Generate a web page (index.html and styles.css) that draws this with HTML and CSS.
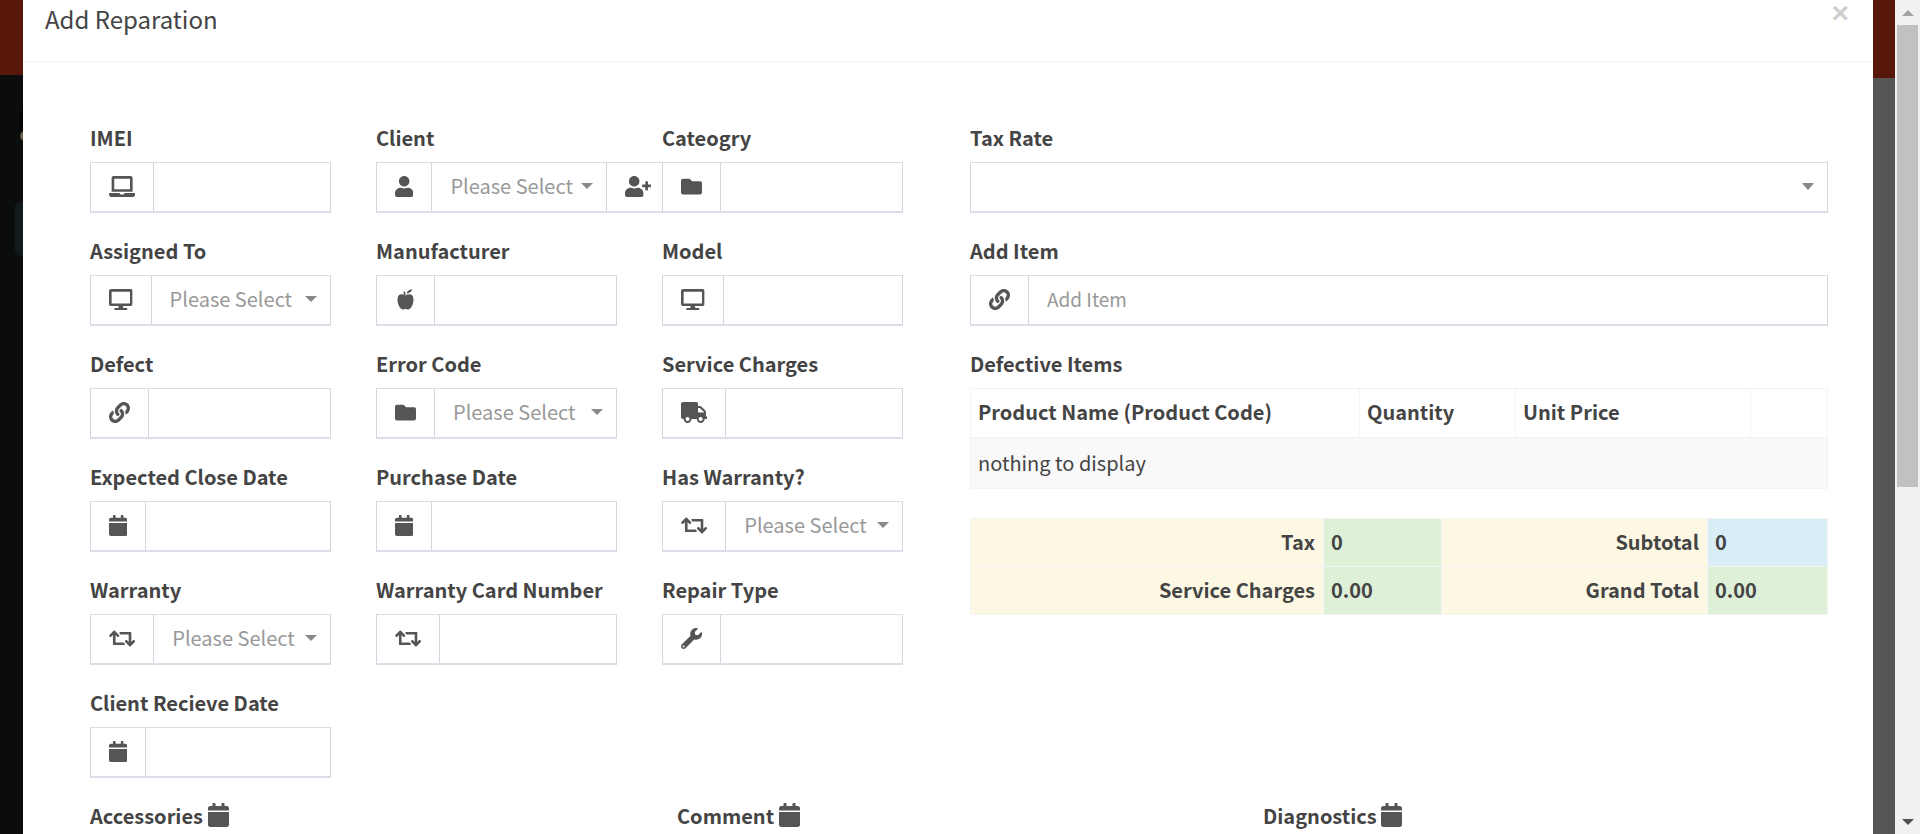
FILE: index.html
```html
<!DOCTYPE html>
<html lang="en">
<head>
<meta charset="utf-8">
<title>Add Reparation</title>
<link rel="stylesheet" href="styles.css">
</head>
<body>
<svg class="defs" width="0" height="0" aria-hidden="true">
  <defs>
    <symbol id="i-laptop" viewBox="0 0 640 512"><path d="M624 416H381.540c-.740 19.810-14.710 32-32.740 32H288c-18.690 0-33.020-17.470-32.770-32H16c-8.800 0-16 7.200-16 16v16c0 35.200 28.800 64 64 64h512c35.200 0 64-28.800 64-64v-16c0-8.800-7.200-16-16-16zM576 48c0-26.400-21.600-48-48-48H112C85.600 0 64 21.600 64 48v336h512V48zm-64 272H128V64h384v256z"/></symbol>
    <symbol id="i-user" viewBox="0 0 448 512"><path d="M224 256c70.700 0 128-57.300 128-128S294.700 0 224 0 96 57.300 96 128s57.300 128 128 128zm89.600 32h-16.700c-22.200 10.200-46.900 16-72.900 16s-50.600-5.800-72.900-16h-16.700C60.200 288 0 348.200 0 422.400V464c0 26.500 21.500 48 48 48h352c26.500 0 48-21.500 48-48v-41.600c0-74.200-60.200-134.400-134.400-134.400z"/></symbol>
    <symbol id="i-user-plus" viewBox="0 0 640 512"><path d="M624 208h-64v-64c0-8.800-7.200-16-16-16h-32c-8.800 0-16 7.200-16 16v64h-64c-8.800 0-16 7.200-16 16v32c0 8.800 7.200 16 16 16h64v64c0 8.800 7.200 16 16 16h32c8.800 0 16-7.200 16-16v-64h64c8.800 0 16-7.200 16-16v-32c0-8.800-7.200-16-16-16zm-400 48c70.700 0 128-57.300 128-128S294.700 0 224 0 96 57.300 96 128s57.300 128 128 128zm89.600 32h-16.700c-22.200 10.200-46.900 16-72.900 16s-50.600-5.800-72.900-16h-16.700C60.200 288 0 348.200 0 422.400V464c0 26.500 21.500 48 48 48h352c26.500 0 48-21.500 48-48v-41.600c0-74.200-60.200-134.400-134.400-134.400z"/></symbol>
    <symbol id="i-folder" viewBox="0 0 512 512"><path d="M464 128H272l-64-64H48C21.490 64 0 85.490 0 112v288c0 26.510 21.490 48 48 48h416c26.510 0 48-21.490 48-48V176c0-26.510-21.490-48-48-48z"/></symbol>
    <symbol id="i-desktop" viewBox="0 0 576 512"><path d="M528 0H48C21.500 0 0 21.500 0 48v320c0 26.500 21.500 48 48 48h192l-16 48h-72c-13.300 0-24 10.700-24 24s10.700 24 24 24h272c13.300 0 24-10.700 24-24s-10.700-24-24-24h-72l-16-48h192c26.500 0 48-21.500 48-48V48c0-26.500-21.500-48-48-48zm-16 352H64V64h448v288z"/></symbol>
    <symbol id="i-apple" viewBox="0 0 16 21"><path d="M8 6.500C9.500 5.500 11 5 12.500 5.200 15 5.500 16 8 16 10.500 16 15 13.500 20.500 10.500 20.500 9.500 20.500 9 20 8 20 7 20 6.500 20.500 5.500 20.500 2.500 20.500 0 15 0 10.500 0 8 1 5.500 3.500 5.200 5 5 6.500 5.500 8 6.500ZM5.800 2.800 7.300 2.300 8.300 5.800 6.800 6.200ZM9 4.500C9.500 2.500 11.500 .5 14.500 .2 14.500 2 12.500 4.200 9 4.500Z"/></symbol>
    <symbol id="i-link" viewBox="0 0 512 512"><path d="M326.612 185.391c59.747 59.809 58.927 155.698.36 214.59-.11.12-.24.25-.36.37l-67.2 67.2c-59.27 59.27-155.699 59.262-214.96 0-59.27-59.26-59.27-155.7 0-214.96l37.106-37.106c9.84-9.84 26.786-3.3 27.294 10.606.648 17.722 3.826 35.527 9.69 52.721 1.986 5.822.567 12.262-3.783 16.612l-13.087 13.087c-28.026 28.026-28.905 73.66-1.155 101.96 28.024 28.579 74.086 28.749 102.325.51l67.2-67.19c28.191-28.191 28.073-73.757 0-101.83-3.701-3.694-7.429-6.564-10.341-8.569a16.037 16.037 0 0 1-6.947-12.606c-.396-10.567 3.348-21.456 11.698-29.806l21.054-21.055c5.521-5.521 14.182-6.199 20.584-1.731a152.482 152.482 0 0 1 20.522 17.197zM467.547 44.449c-59.261-59.262-155.69-59.27-214.96 0l-67.2 67.2c-.12.12-.25.25-.36.37-58.566 58.892-59.387 154.781.36 214.59a152.454 152.454 0 0 0 20.521 17.196c6.402 4.468 15.064 3.789 20.584-1.731l21.054-21.055c8.35-8.35 12.094-19.239 11.698-29.806a16.037 16.037 0 0 0-6.947-12.606c-2.912-2.005-6.64-4.875-10.341-8.569-28.073-28.073-28.191-73.639 0-101.83l67.2-67.19c28.239-28.239 74.3-28.069 102.325.51 27.75 28.3 26.872 73.934-1.155 101.96l-13.087 13.087c-4.35 4.35-5.769 10.79-3.783 16.612 5.864 17.194 9.042 34.999 9.69 52.721.509 13.906 17.454 20.446 27.294 10.606l37.106-37.106c59.271-59.259 59.271-155.699.001-214.959z"/></symbol>
    <symbol id="i-truck" viewBox="0 0 640 512"><path d="M624 352h-16V243.900c0-12.700-5.100-24.900-14.100-33.900L494 110.100c-9-9-21.200-14.100-33.900-14.100H416V48c0-26.500-21.500-48-48-48H48C21.500 0 0 21.500 0 48v320c0 26.500 21.500 48 48 48h16c0 53 43 96 96 96s96-43 96-96h128c0 53 43 96 96 96s96-43 96-96h48c8.800 0 16-7.200 16-16v-32c0-8.800-7.200-16-16-16zM160 464c-26.500 0-48-21.500-48-48s21.500-48 48-48 48 21.500 48 48-21.500 48-48 48zm320 0c-26.500 0-48-21.500-48-48s21.500-48 48-48 48 21.500 48 48-21.500 48-48 48zm80-208H416V144h44.100l99.900 99.900V256z"/></symbol>
    <symbol id="i-calendar" viewBox="0 0 448 512"><path d="M12 192h424c6.600 0 12 5.400 12 12v260c0 26.500-21.500 48-48 48H48c-26.500 0-48-21.500-48-48V204c0-6.600 5.400-12 12-12zm436-44v-36c0-26.500-21.500-48-48-48h-48V12c0-6.600-5.400-12-12-12h-40c-6.600 0-12 5.400-12 12v52H160V12c0-6.600-5.400-12-12-12h-40c-6.600 0-12 5.400-12 12v52H48C21.500 64 0 85.500 0 112v36c0 6.600 5.400 12 12 12h424c6.600 0 12-5.400 12-12z"/></symbol>
    <symbol id="i-retweet" viewBox="0 0 640 512"><path d="M629.657 343.598L528.971 444.284c-9.373 9.372-24.568 9.372-33.941 0L394.343 343.598c-9.373-9.373-9.373-24.569 0-33.941l10.823-10.823c9.562-9.562 25.133-9.34 34.425.492L480 342.118V160H292.451a24.005 24.005 0 0 1-16.971-7.029l-16-16C244.361 121.851 255.069 96 276.451 96H520c13.255 0 24 10.745 24 24v222.118l40.409-43.792c9.292-9.83 24.863-10.054 34.425-.492l10.823 10.823c9.373 9.372 9.373 24.569 0 33.941zm-265.138 15.431A23.999 23.999 0 0 0 347.548 352H160V169.881l40.409 43.792c9.292 9.83 24.863 10.054 34.425.491l10.823-10.823c9.373-9.372 9.373-24.569 0-33.941L144.971 68.716c-9.373-9.373-24.569-9.373-33.941 0L10.343 169.402c-9.373 9.373-9.373 24.569 0 33.941l10.823 10.823c9.562 9.562 25.133 9.34 34.425-.492L96 169.881V392c0 13.255 10.745 24 24 24h243.549c21.382 0 32.09-25.851 16.971-40.971l-16.001-16z"/></symbol>
    <symbol id="i-wrench" viewBox="0 0 512 512"><path d="M507.730 109.100c-2.240-9.030-13.540-12.090-20.120-5.510l-74.360 74.360-67.880-11.310-11.310-67.880 74.360-74.360c6.620-6.620 3.430-17.900-5.660-20.160-47.380-11.740-99.550.91-136.580 37.930-39.640 39.640-50.550 97.100-34.050 147.200L18.740 402.760c-24.990 24.990-24.990 65.510 0 90.500 24.990 24.990 65.510 24.990 90.500 0l213.210-213.210c50.120 16.710 107.470 5.680 147.370-34.220 37.070-37.070 49.700-89.320 37.910-136.730zM64 472c-13.250 0-24-10.750-24-24 0-13.260 10.750-24 24-24s24 10.740 24 24c0 13.250-10.750 24-24 24z"/></symbol>
  </defs>
</svg>

<div class="page">
  <div class="side">
    <span class="spot-avatar"></span>
    <span class="spot-face"></span>
    <span class="spot-block"></span>
  </div>
  <div class="modal">
    <header class="modal-head">
      <h4 class="modal-title">Add Reparation</h4>
      <span class="close">×</span>
    </header>
    <div class="modal-body">
      <div class="top">
        <div class="fields">
          <div class="field">
            <label class="lbl">IMEI</label>
            <div class="group"><span class="addon"><svg class="ic w-640"><use href="#i-laptop"/></svg></span><span class="ctl"></span></div>
          </div>
          <div class="field">
            <label class="lbl">Client</label>
            <div class="group group-over"><span class="addon"><svg class="ic w-448"><use href="#i-user"/></svg></span><span class="ctl sel sel-mid"><span class="ph">Please Select</span><i class="caret"></i></span><span class="addon addon-end"><svg class="ic w-640"><use href="#i-user-plus"/></svg></span></div>
          </div>
          <div class="field field-top">
            <label class="lbl">Cateogry</label>
            <div class="group"><span class="addon"><svg class="ic w-512"><use href="#i-folder"/></svg></span><span class="ctl"></span></div>
          </div>

          <div class="field">
            <label class="lbl">Assigned To</label>
            <div class="group"><span class="addon"><svg class="ic w-576"><use href="#i-desktop"/></svg></span><span class="ctl sel"><span class="ph">Please Select</span><i class="caret"></i></span></div>
          </div>
          <div class="field">
            <label class="lbl">Manufacturer</label>
            <div class="group"><span class="addon"><svg class="ic w-512"><use href="#i-apple"/></svg></span><span class="ctl"></span></div>
          </div>
          <div class="field">
            <label class="lbl">Model</label>
            <div class="group"><span class="addon"><svg class="ic w-576"><use href="#i-desktop"/></svg></span><span class="ctl"></span></div>
          </div>

          <div class="field">
            <label class="lbl">Defect</label>
            <div class="group"><span class="addon"><svg class="ic w-512"><use href="#i-link"/></svg></span><span class="ctl"></span></div>
          </div>
          <div class="field">
            <label class="lbl">Error Code</label>
            <div class="group"><span class="addon"><svg class="ic w-512"><use href="#i-folder"/></svg></span><span class="ctl sel"><span class="ph">Please Select</span><i class="caret"></i></span></div>
          </div>
          <div class="field">
            <label class="lbl">Service Charges</label>
            <div class="group"><span class="addon"><svg class="ic w-640"><use href="#i-truck"/></svg></span><span class="ctl"></span></div>
          </div>

          <div class="field">
            <label class="lbl">Expected Close Date</label>
            <div class="group"><span class="addon"><svg class="ic w-448"><use href="#i-calendar"/></svg></span><span class="ctl"></span></div>
          </div>
          <div class="field">
            <label class="lbl">Purchase Date</label>
            <div class="group"><span class="addon"><svg class="ic w-448"><use href="#i-calendar"/></svg></span><span class="ctl"></span></div>
          </div>
          <div class="field">
            <label class="lbl">Has Warranty?</label>
            <div class="group"><span class="addon"><svg class="ic w-640"><use href="#i-retweet"/></svg></span><span class="ctl sel"><span class="ph">Please Select</span><i class="caret"></i></span></div>
          </div>

          <div class="field">
            <label class="lbl">Warranty</label>
            <div class="group"><span class="addon"><svg class="ic w-640"><use href="#i-retweet"/></svg></span><span class="ctl sel"><span class="ph">Please Select</span><i class="caret"></i></span></div>
          </div>
          <div class="field">
            <label class="lbl">Warranty Card Number</label>
            <div class="group"><span class="addon"><svg class="ic w-640"><use href="#i-retweet"/></svg></span><span class="ctl"></span></div>
          </div>
          <div class="field">
            <label class="lbl">Repair Type</label>
            <div class="group"><span class="addon"><svg class="ic w-512"><use href="#i-wrench"/></svg></span><span class="ctl"></span></div>
          </div>

          <div class="field">
            <label class="lbl">Client Recieve Date</label>
            <div class="group"><span class="addon"><svg class="ic w-448"><use href="#i-calendar"/></svg></span><span class="ctl"></span></div>
          </div>
        </div>

        <div class="right">
          <div class="field">
            <label class="lbl">Tax Rate</label>
            <div class="group"><span class="ctl sel"><span class="ph"></span><i class="caret caret-lg"></i></span></div>
          </div>
          <div class="field">
            <label class="lbl">Add Item</label>
            <div class="group"><span class="addon"><svg class="ic w-512"><use href="#i-link"/></svg></span><span class="ctl"><span class="ph ph-sm">Add Item</span></span></div>
          </div>
          <div class="field">
            <label class="lbl">Defective Items</label>
            <table class="items">
              <thead>
                <tr><th class="c-name">Product Name (Product Code)</th><th class="c-qty">Quantity</th><th class="c-price">Unit Price</th><th class="c-act"></th></tr>
              </thead>
              <tbody>
                <tr><td colspan="4">nothing to display</td></tr>
              </tbody>
            </table>
          </div>
          <table class="totals">
            <tbody>
              <tr><th class="t-lbl1">Tax</th><td class="t-val1 ok">0</td><th class="t-lbl2">Subtotal</th><td class="t-val2 info">0</td></tr>
              <tr><th class="t-lbl1">Service Charges</th><td class="t-val1 ok">0.00</td><th class="t-lbl2">Grand Total</th><td class="t-val2 ok">0.00</td></tr>
            </tbody>
          </table>
        </div>
      </div>
      <div class="notes">
        <label class="lbl note-lbl">Accessories <svg class="ic ic-note"><use href="#i-calendar"/></svg></label>
        <label class="lbl note-lbl">Comment <svg class="ic ic-note"><use href="#i-calendar"/></svg></label>
        <label class="lbl note-lbl">Diagnostics <svg class="ic ic-note"><use href="#i-calendar"/></svg></label>
      </div>
    </div>
  </div>
  <div class="side side-r"></div>
  <div class="scrollbar">
    <span class="sb-btn"><i class="sb-up"></i></span>
    <span class="sb-track"><span class="sb-thumb"></span></span>
    <span class="sb-btn"><i class="sb-down"></i></span>
  </div>
</div>
</body>
</html>
```
FILE: styles.css
```css
* { box-sizing: border-box; }
html, body { margin: 0; height: 100%; overflow: hidden; }
body {
  font-family: "Noto Sans CJK SC", "Source Sans Pro", "Noto Sans", sans-serif;
  font-size: 20px;
  line-height: 1.42857;
  color: #444;
  background: #0b0c0c;
}
.defs { position: absolute; }
.page { display: flex; height: 834px; width: 1920px; overflow: hidden; }
.side { position: relative; width: 23px; flex: none; overflow: hidden; background: linear-gradient(#57170a 0 75px, #0b0c0c 75px); }
.side-r { width: 22px; background: linear-gradient(#57170a 0 78px, #565656 78px); }
.spot-avatar { position: absolute; left: 19px; top: 105px; width: 30px; height: 32px; border-radius: 50%; background: #050505; }
.spot-face { position: absolute; left: 20px; top: 131px; width: 10px; height: 10px; border-radius: 50%; background: #6b5f4f; }
.spot-block { position: absolute; left: 15px; top: 202px; width: 30px; height: 54px; border-radius: 5px; background: #111a1c; }

.modal { width: 1850px; flex: none; background: #fff; height: 834px; overflow: hidden; }
.modal-head {
  display: flex;
  justify-content: space-between;
  align-items: flex-start;
  height: 62px;
  padding: 0 22px;
  border-bottom: 1px solid #f4f4f4;
}
.modal-title { margin: 0; font-size: 24px; font-weight: 400; line-height: 38px; color: #444; }
.close { font-family: "Liberation Sans", Arial, sans-serif; font-size: 30px; font-weight: 700; line-height: 26px; color: #cfcfcf; margin-right: 2px; }
.modal-body { padding: 61px 45px 0 67px; }
.top { display: flex; gap: 67px; }
.fields { display: grid; grid-template-columns: 241px 241px 241px; column-gap: 45px; width: 813px; flex: none; align-content: start; }
.right { flex: 1; min-width: 0; }
.field { height: 113px; }
.field-top { z-index: 1; }
.lbl { display: block; font-weight: 700; font-size: 20px; line-height: 30px; margin-bottom: 8.5px; color: #444; }
.group { display: flex; height: 51px; border: 1px solid #d2d6de; border-top-color: #dcdde6; border-bottom: 2px solid #dcdde6; background: #fff; }
.group-over { margin-right: -53px; }
.addon { display: flex; flex: none; align-items: center; justify-content: center; padding: 0 18px; border-right: 1px solid #d2d6de; color: #555; }
.addon-end { border-right: 0; }
.ctl { flex: 1; min-width: 0; display: flex; align-items: center; padding: 0 18px 1px; font-size: 20px; white-space: nowrap; }
.sel { justify-content: space-between; padding-right: 13px; }
.sel-mid { border-right: 1px solid #d2d6de; }
.ph { color: #999; font-weight: 400; }
.ph-sm { font-size: 19px; }
.caret { width: 0; height: 0; flex: none; border-left: 6px solid transparent; border-right: 6px solid transparent; border-top: 6px solid #888; margin-left: 6px; }
.caret-lg { border-top-width: 7px; }
.ic { display: inline-block; height: 21px; fill: #555; flex: none; }
.w-640 { width: 26.25px; }
.w-576 { width: 23.6px; }
.w-512 { width: 21px; }
.w-448 { width: 18.4px; }

.items { width: 100%; border-collapse: collapse; table-layout: fixed; font-size: 20px; }
.items th { font-weight: 700; text-align: left; padding: 0 7px; height: 50px; border: 1px solid #f4f4f4; border-bottom-width: 2px; }
.items td { padding: 0 7px; height: 50px; background: #f9f9f9; border: 1px solid #f4f4f4; }
.c-name { width: 389px; }
.c-qty { width: 156px; }
.c-price { width: 235px; }

.totals { width: 100%; border-collapse: collapse; table-layout: fixed; margin-top: 56px; font-size: 20px; }
.totals th, .totals td { height: 48px; padding: 0 8px; border: 1px solid #f4f4f4; font-weight: 700; }
.totals td { padding: 0 7px; }
.totals th { text-align: right; background: #fcf8e3; }
.t-lbl1 { width: 353px; }
.t-val1 { width: 118px; }
.t-lbl2 { width: 266px; }
.ok { background: #dff0d8; }
.info { background: #d9edf7; }

.notes { display: grid; grid-template-columns: 587px 586px 1fr; }
.note-lbl { margin: 0; }
.ic-note { width: 21px; height: 24px; vertical-align: -3px; }

.scrollbar { width: 25px; flex: none; background: #f1f1f1; display: flex; flex-direction: column; }
.sb-btn { height: 25px; flex: none; display: flex; align-items: center; justify-content: center; }
.sb-up { border-left: 6px solid transparent; border-right: 6px solid transparent; border-bottom: 6px solid #a3a3a3; }
.sb-down { border-left: 6px solid transparent; border-right: 6px solid transparent; border-top: 6px solid #505050; }
.sb-track { flex: 1; padding: 0 2px; }
.sb-thumb { display: block; height: 462px; background: #c1c1c1; }
```
